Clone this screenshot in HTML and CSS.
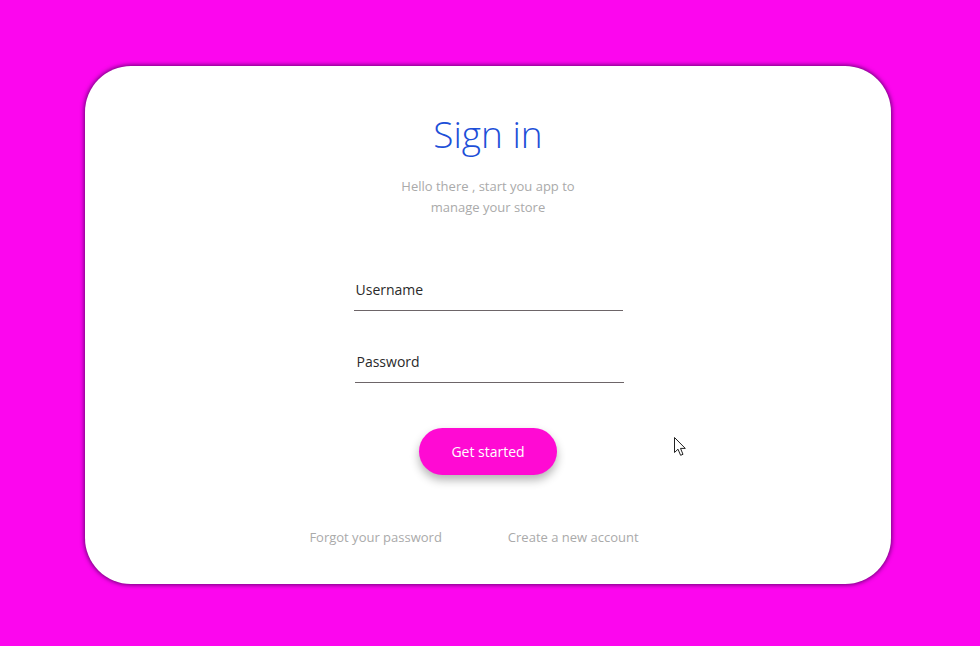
FILE: index.html
```html
<!DOCTYPE html>
<html lang="en">
<head>
<meta charset="utf-8">
<title>Sign in</title>
<link rel="stylesheet" href="styles.css">
</head>
<body>
<main class="card">
  <h1 class="title">Sign in</h1>
  <p class="subtitle">Hello there , start you app to<br>manage your store</p>
  <form class="form">
    <label class="field"><span class="field-label">Username</span></label>
    <label class="field field-2"><span class="field-label">Password</span></label>
    <button type="button" class="btn">Get started</button>
  </form>
  <div class="links">
    <a class="link">Forgot your password</a>
    <a class="link">Create a new account</a>
  </div>
  <svg class="cursor" width="13" height="20" viewBox="0 0 13 20"><path d="M0.5 0.5 L0.5 15.5 L4 12.2 L6.6 18.3 L9 17.3 L6.5 11.4 L11.3 11.4 Z" fill="#fff" stroke="#222" stroke-width="1" stroke-linejoin="round"/></svg>
</main>
</body>
</html>
```
FILE: styles.css
```css
* { box-sizing: border-box; }
html, body { margin: 0; padding: 0; }
body {
  width: 980px;
  height: 646px;
  background: #fc06ee;
  font-family: "Open Sans", "Noto Sans", sans-serif;
  overflow: hidden;
  padding-top: 66px;
  padding-left: 85px;
}
.card {
  position: relative;
  width: 806px;
  height: 518px;
  background: #fff;
  border-radius: 46px;
  box-shadow: 0 0 4px 1px rgba(60, 0, 80, 0.75);
  display: flex;
  flex-direction: column;
  align-items: center;
  padding-top: 45px;
}
.title {
  margin: 0;
  font-size: 37px;
  font-weight: 300;
  line-height: 46px;
  color: #1d4fd8;
}
.subtitle {
  margin: 19px 0 0;
  font-size: 13px;
  line-height: 21px;
  color: #aaa;
  text-align: center;
}
.form {
  margin-top: 54px;
  display: flex;
  flex-direction: column;
  align-items: center;
}
.field {
  display: block;
  width: 269px;
  height: 39px;
  border-bottom: 1.5px solid #6d6568;
  padding: 6px 0 0 2px;
}
.field-2 {
  margin-top: 33px;
  margin-left: 2px;
  padding-left: 2px;
}
.field-label {
  font-size: 14px;
  color: #2a2a2a;
}
.btn {
  margin-top: 45px;
  width: 138px;
  height: 47px;
  border: none;
  border-radius: 24px;
  background: #ff0ad3;
  color: #fff;
  font-family: inherit;
  font-size: 14px;
  box-shadow: 0 5px 10px rgba(0, 0, 0, 0.3);
}
.links {
  margin-top: 53px;
  margin-right: 28px;
  display: flex;
  gap: 66px;
}
.link {
  font-size: 13px;
  color: #aaa;
}
.cursor {
  position: absolute;
  left: 589px;
  top: 371px;
}
```
